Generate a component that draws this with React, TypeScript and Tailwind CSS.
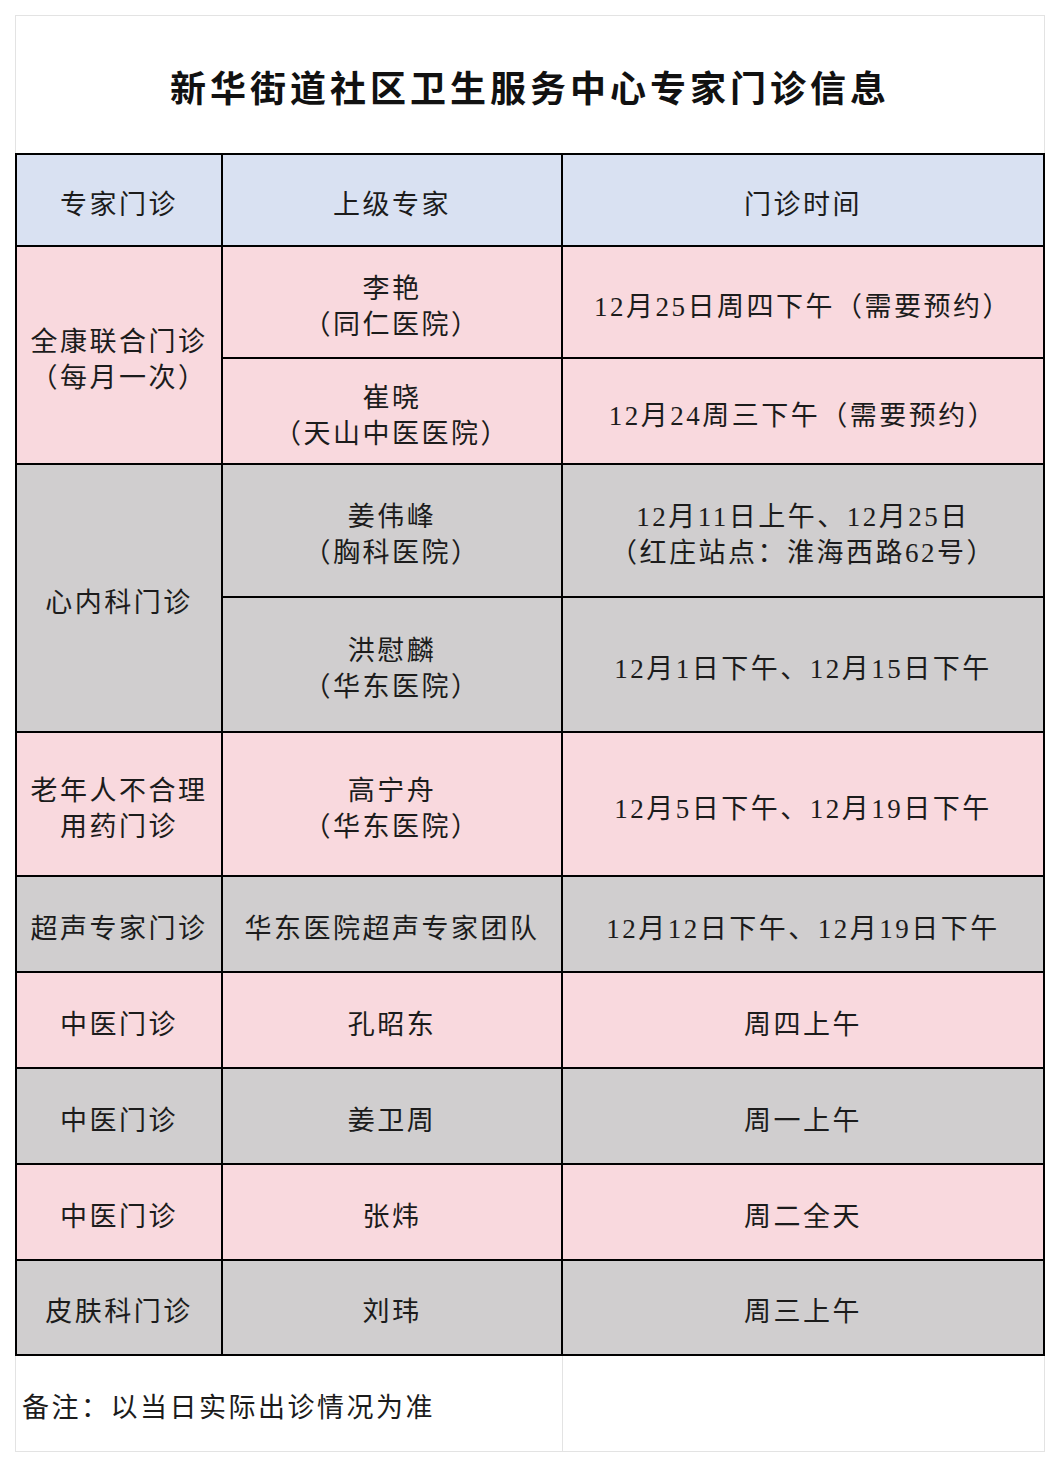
const font = "font-['Liberation_Serif','Noto_Sans_CJK_SC',serif]";

type Tone = "blue" | "pink" | "gray";

const bg: Record<Tone, string> = {
  blue: "bg-[#d9e1f2]",
  pink: "bg-[#f9d9de]",
  gray: "bg-[#d0cecf]",
};

function Cell({
  tone,
  lines,
  className = "",
}: {
  tone: Tone;
  lines: string[];
  className?: string;
}) {
  return (
    <div
      className={`${bg[tone]} flex flex-col items-center justify-center pt-[9px] text-center text-[27px] leading-[36px] tracking-[2.5px] text-[#1c1c1c] ${className}`}
    >
      {lines.map((l, i) => (
        <span key={i}>{l}</span>
      ))}
    </div>
  );
}

export default function App() {
  return (
    <div className={`min-h-[1468px] bg-white pl-[15px] pt-[15px] ${font}`}>
      <div className="w-[1030px]">
        {/* Title */}
        <div className="flex h-[138px] items-center justify-center border-x border-t border-[#e3e3e3] pt-[10px]">
          <h1 className="text-[36px] font-bold tracking-[4px] text-[#111]">
            新华街道社区卫生服务中心专家门诊信息
          </h1>
        </div>

        {/* Table */}
        <div className="grid grid-cols-[204px_338px_480px] grid-rows-[90px_110px_104px_131px_133px_142px_94px_94px_94px_94px_93px] gap-[2px] bg-black p-[2px]">
          <Cell tone="blue" lines={["专家门诊"]} />
          <Cell tone="blue" lines={["上级专家"]} />
          <Cell tone="blue" lines={["门诊时间"]} />

          <Cell tone="pink" lines={["全康联合门诊", "（每月一次）"]} className="row-span-2" />
          <Cell tone="pink" lines={["李艳", "（同仁医院）"]} />
          <Cell tone="pink" lines={["12月25日周四下午（需要预约）"]} />
          <Cell tone="pink" lines={["崔晓", "（天山中医医院）"]} />
          <Cell tone="pink" lines={["12月24周三下午（需要预约）"]} />

          <Cell tone="gray" lines={["心内科门诊"]} className="row-span-2" />
          <Cell tone="gray" lines={["姜伟峰", "（胸科医院）"]} />
          <Cell tone="gray" lines={["12月11日上午、12月25日", "（红庄站点：淮海西路62号）"]} />
          <Cell tone="gray" lines={["洪慰麟", "（华东医院）"]} />
          <Cell tone="gray" lines={["12月1日下午、12月15日下午"]} />

          <Cell tone="pink" lines={["老年人不合理", "用药门诊"]} />
          <Cell tone="pink" lines={["高宁舟", "（华东医院）"]} />
          <Cell tone="pink" lines={["12月5日下午、12月19日下午"]} />

          <Cell tone="gray" lines={["超声专家门诊"]} />
          <Cell tone="gray" lines={["华东医院超声专家团队"]} />
          <Cell tone="gray" lines={["12月12日下午、12月19日下午"]} />

          <Cell tone="pink" lines={["中医门诊"]} />
          <Cell tone="pink" lines={["孔昭东"]} />
          <Cell tone="pink" lines={["周四上午"]} />

          <Cell tone="gray" lines={["中医门诊"]} />
          <Cell tone="gray" lines={["姜卫周"]} />
          <Cell tone="gray" lines={["周一上午"]} />

          <Cell tone="pink" lines={["中医门诊"]} />
          <Cell tone="pink" lines={["张炜"]} />
          <Cell tone="pink" lines={["周二全天"]} />

          <Cell tone="gray" lines={["皮肤科门诊"]} />
          <Cell tone="gray" lines={["刘玮"]} />
          <Cell tone="gray" lines={["周三上午"]} />
        </div>

        {/* Note */}
        <div className="grid h-[96px] grid-cols-[547px_483px] border-x border-b border-[#e3e3e3]">
          <div className="flex items-center border-r border-[#e3e3e3] pl-[6px] pt-[9px] text-[27px] tracking-[2.5px] text-[#1c1c1c]">
            备注：以当日实际出诊情况为准
          </div>
          <div />
        </div>
      </div>
    </div>
  );
}
